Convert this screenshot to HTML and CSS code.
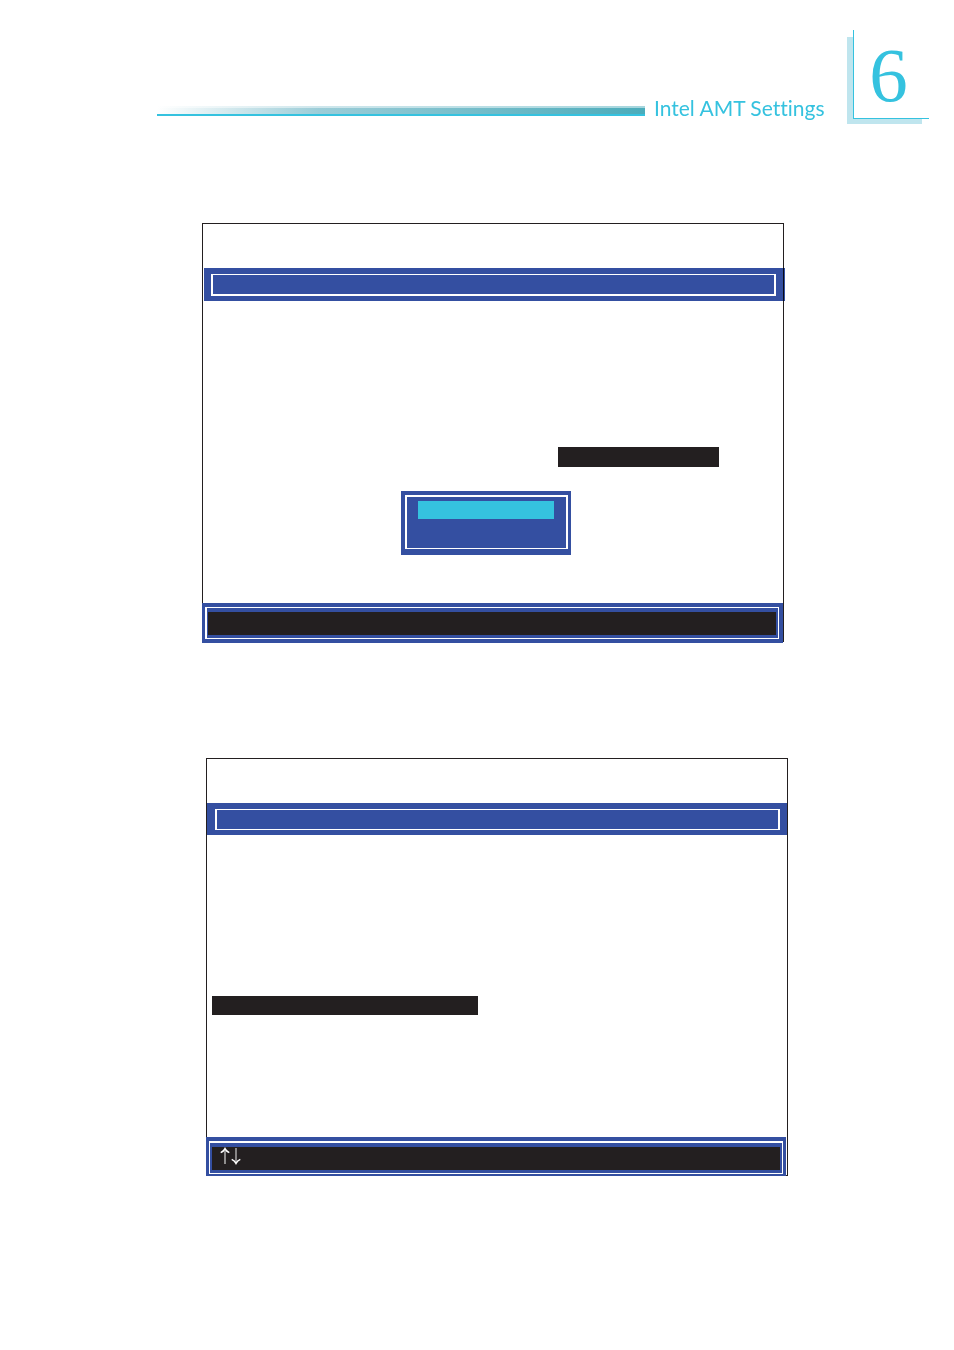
FILE: index.html
```html
<!doctype html>
<html lang="en">
<head>
  <meta charset="utf-8">
  <meta name="viewport" content="width=device-width, initial-scale=1">
  <title>Intel AMT Settings</title>
  <link rel="stylesheet" href="styles.css">
</head>
<body>
<header class="page-header">
  <div class="header-rule"></div>
  <h1>Intel AMT Settings</h1>
  <div class="chapter">
    <div class="chapter-number">6</div>
  </div>
</header>

<main>
  <section class="screen screen-popup">
    <div class="title-bar">
      <div class="title-frame"></div>
    </div>
    <div class="screen-body">
      <div class="selected-value"></div>
      <div class="popup">
        <div class="popup-frame">
          <div class="popup-selected"></div>
        </div>
      </div>
    </div>
    <div class="key-bar">
      <div class="key-frame">
        <div class="keys"></div>
      </div>
    </div>
  </section>

  <section class="screen screen-menu">
    <div class="title-bar">
      <div class="title-frame"></div>
    </div>
    <div class="screen-body">
      <div class="selected-item"></div>
    </div>
    <div class="key-bar">
      <div class="key-frame">
        <div class="keys">
          <svg class="arrows" width="22" height="18" viewBox="0 0 22 18" fill="none" role="img" aria-label="Up and down arrows">
            <path d="M5 2v15" stroke="#aaa" stroke-width="1.6"/>
            <path d="M16 1v15" stroke="#ccc" stroke-width="1.2"/>
            <path d="M.7 5.6Q3.6 4.4 5 1.6Q6.4 4.4 9.3 5.6M11.7 12.4Q14.6 13.600 16 16.400Q17.400 13.600 20.300 12.400" stroke="#fff" stroke-width="1.5"/>
          </svg>
        </div>
      </div>
    </div>
  </section>
</main>
</body>
</html>
```
FILE: styles.css
```css
* {
  box-sizing: border-box;
}

body {
  margin: 0;
  background-color: #fff;
  font-family: Lato, sans-serif;
}

/* header */
.page-header {
  display: flex;
  align-items: flex-start;
  padding: 30px 25px 0 157px;
  color: #35c2df;
}

.header-rule {
  flex: 1;
  height: 10px;
  margin-top: 76px;
  border-bottom: 2px solid #35c2df;
  background: linear-gradient(rgba(255, 255, 255, 0.5) 2px, transparent 2px), linear-gradient(to right, #fff, #9ccdd8 33%, #4bacbb);
}

h1 {
  flex: 0 0 193px;
  margin: 64px 0 0 9px;
  font-size: 21px;
  font-weight: 400;
  font-variant-ligatures: none;
  line-height: 28px;
  white-space: nowrap;
}

.chapter {
  padding: 0 0 5px 6px;
  background: linear-gradient(#bfe5ee, #bfe5ee) 0 7px / 75px 87px no-repeat;
}

.chapter-number {
  width: 76px;
  height: 89px;
  padding-right: 6px;
  border-left: 1px solid #35c2df;
  border-bottom: 1px solid #35c2df;
  background-color: #fff;
  font-family: "Liberation Serif", serif;
  font-size: 77px;
  line-height: 90px;
  text-align: center;
}

/* setup screens */
.screen {
  padding-top: 44px;
  border: 1px solid #231f20;
}

.screen-popup {
  margin: 99px 170px 0 202px;
}

.screen-menu {
  margin: 115px 166px 0 206px;
}

.title-bar {
  padding: 6px 8px;
  background-color: #344fa1;
}

/* the screen outline shows through the right end of the bar */
.screen-popup .title-bar {
  margin: 0 -2px 0 1px;
  padding: 6px 9px 5px 7px;
  mix-blend-mode: multiply;
}

.screen-menu .title-bar {
  padding: 6px 7px 5px 8px;
}

.title-frame {
  height: 21px;
  border: 1px solid #fff;
  border-width: 1px 2px;
}

.screen-popup .title-frame {
  height: 22px;
  border-bottom-width: 2px;
}

.screen-body {
  display: flex;
  flex-direction: column;
  align-items: flex-start;
}

.selected-value {
  width: 161px;
  height: 20px;
  margin: 146px 64px 0 0;
  align-self: flex-end;
  background-color: #231f20;
}

.popup {
  width: 170px;
  height: 64px;
  margin: 24px 0 48px 198px;
  padding: 4px 3px 6px 4px;
  background-color: #344fa1;
}

.popup-frame {
  height: 54px;
  padding: 4px 12px 0 11px;
  border: 2px solid #fff;
  border-bottom-width: 1px;
}

.popup-selected {
  height: 18px;
  background-color: #35c2df;
}

.selected-item {
  width: 266px;
  height: 19px;
  margin: 161px 0 122px 5px;
  background-color: #231f20;
}

/* sits on top of the screen outline */
.key-bar {
  position: relative;
  margin: 0 0 -2px -1px;
  padding: 4px 4px 4px 3px;
  background-color: #344fa1;
}

.key-frame {
  padding: 4px 2px 3px 1px;
  border: 1px solid #fff;
  border-left-width: 2px;
}

.keys {
  height: 23px;
  background-color: #231f20;
}

.screen-menu {
  margin-top: 116px;
}

.screen-menu .key-bar {
  margin: 0 1px -3px -1px;
  padding: 4px 3px;
}

.screen-menu .key-frame {
  padding: 4px 2px 3px;
  border-width: 2px 1px 1px;
}

.screen-menu .keys {
  padding-left: 8px;
}

.arrows {
  display: block;
}
```
